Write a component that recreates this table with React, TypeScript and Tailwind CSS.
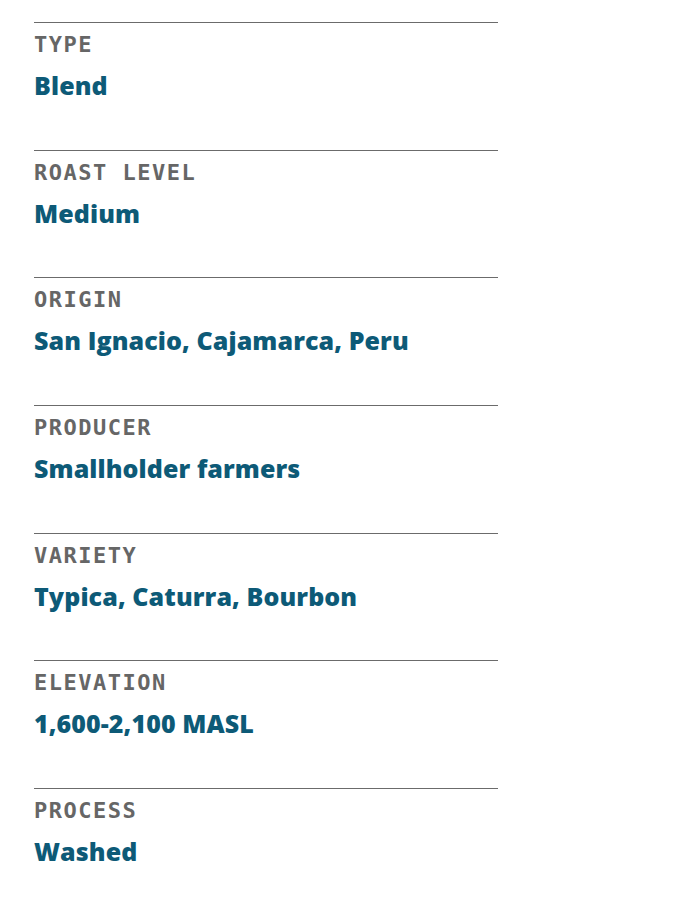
const items: [string, string][] = [
  ["TYPE", "Blend"],
  ["ROAST LEVEL", "Medium"],
  ["ORIGIN", "San Ignacio, Cajamarca, Peru"],
  ["PRODUCER", "Smallholder farmers"],
  ["VARIETY", "Typica, Caturra, Bourbon"],
  ["ELEVATION", "1,600-2,100 MASL"],
  ["PROCESS", "Washed"],
];

export default function App() {
  return (
    <div className="min-h-[900px] w-[684px] bg-white pt-[22px] pl-[34px]">
      <div className="flex w-[464px] flex-col">
        {items.map(([label, value]) => (
          <div key={label} className="h-[127.7px] border-t border-[#6b6b6b]">
            <div
              className="mt-[8px] text-[22px] font-bold leading-[28px] tracking-[1.5px] text-[#666666]"
              style={{ fontFamily: '"DejaVu Sans Mono", monospace' }}
            >
              {label}
            </div>
            <div
              className="mt-[10px] text-[25px] font-extrabold leading-[32px] tracking-[0.1px] text-[#0d5a77]"
              style={{ fontFamily: '"Open Sans", sans-serif' }}
            >
              {value}
            </div>
          </div>
        ))}
      </div>
    </div>
  );
}
